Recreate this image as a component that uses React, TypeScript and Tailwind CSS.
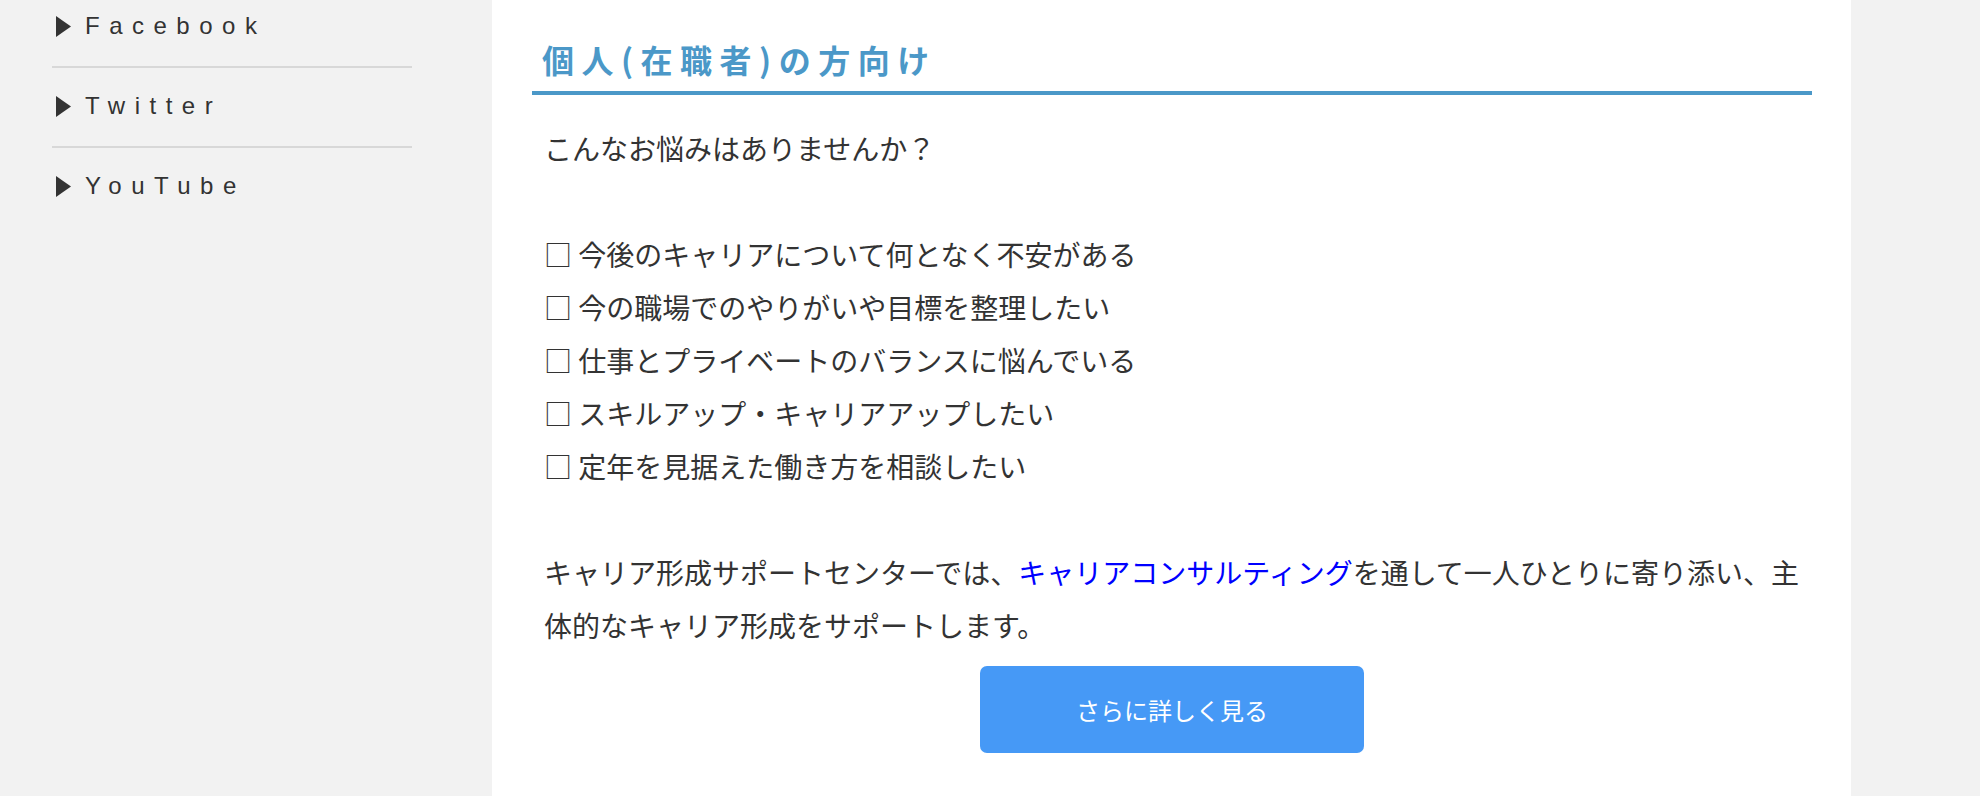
const links = ['Facebook', 'Twitter', 'YouTube'];

const worries = [
  '今後のキャリアについて何となく不安がある',
  '今の職場でのやりがいや目標を整理したい',
  '仕事とプライベートのバランスに悩んでいる',
  'スキルアップ・キャリアアップしたい',
  '定年を見据えた働き方を相談したい',
];

const Triangle = () => (
  <svg width="15" height="21" viewBox="0 0 15 21" className="shrink-0">
    <polygon points="0,0 15,10.5 0,21" fill="#333333" />
  </svg>
);

const App = () => {
  return (
    <div className="flex h-[796px] overflow-hidden bg-[#f2f2f2]">
      {/* sidebar */}
      <aside className="w-[492px] shrink-0 pl-[52px]">
        <ul className="-mt-[12px] w-[360px]">
          {links.map((name, i) => (
            <li
              key={name}
              className={
                i < links.length - 1
                  ? 'border-b-2 border-[#d8d8d8]'
                  : ''
              }
            >
              <a className="flex h-[78px] items-center gap-[14px] pb-[2px] pl-[4px] font-['Liberation_Sans',sans-serif] text-[24px] tracking-[9.5px] text-[#333333]">
                <Triangle />
                <span>{name}</span>
              </a>
            </li>
          ))}
        </ul>
      </aside>

      {/* main */}
      <main className="w-[1359px] shrink-0 bg-white pl-[40px] pr-[39px] pt-[35px] font-['Noto_Sans_CJK_JP',sans-serif] text-[#333333]">
        <h2 className="border-b-4 border-[#4b98c8] pb-[8px] pl-[10px] text-[32px] font-bold leading-[48px] tracking-[7.5px] text-[#4b98c8]">
          個人(在職者)の方向け
        </h2>

        <div className="ml-[12px] text-[28px] leading-[53px]">
          <p className="mt-[27px]">こんなお悩みはありませんか？</p>

          <ul className="mt-[53px]">
            {worries.map((w) => (
              <li key={w}>□ {w}</li>
            ))}
          </ul>

          <p className="mt-[53px]">
            キャリア形成サポートセンターでは、
            <a className="text-[#0000ff]">キャリアコンサルティング</a>
            を通して一人ひとりに寄り添い、主体的なキャリア形成をサポートします。
          </p>
        </div>

        <div className="mt-[14px] flex justify-center">
          <button
            type="button"
            className="flex h-[87px] w-[384px] items-center justify-center rounded-[7px] bg-[#4699f6] text-[24px] text-white"
          >
            さらに詳しく見る
          </button>
        </div>
      </main>

      <div className="flex-1" />
    </div>
  );
};

export default App;
